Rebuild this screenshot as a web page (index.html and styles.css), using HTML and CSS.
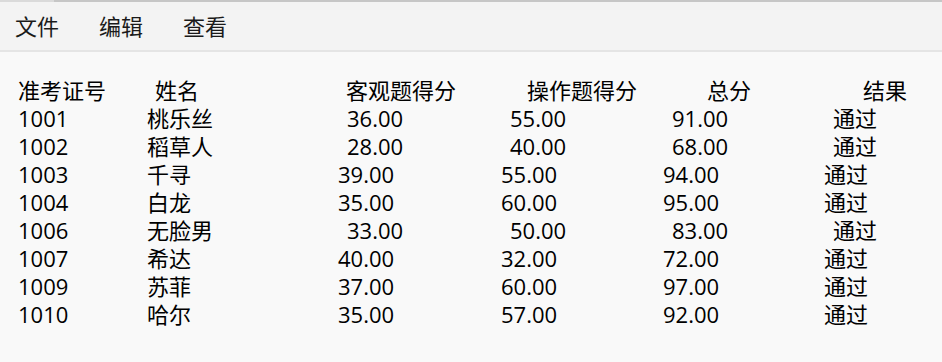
FILE: index.html
```html
<!DOCTYPE html>
<html lang="zh-CN">
<head>
  <meta charset="UTF-8" />
  <title>成绩查询</title>
  <link rel="stylesheet" href="styles.css">
</head>
<body>
  <div class="topline"></div>
  <div class="menubar">
    <span class="menu-item">文件</span>
    <span class="menu-item">编辑</span>
    <span class="menu-item">查看</span>
  </div>

  <div class="sheet">
    <div class="row head">
      <span>准考证号</span><span>姓名</span><span>客观题得分</span><span>操作题得分</span><span>总分</span><span>结果</span>
    </div>
    <div class="row wide">
      <span>1001</span><span>桃乐丝</span><span>36.00</span><span>55.00</span><span>91.00</span><span>通过</span>
    </div>
    <div class="row wide">
      <span>1002</span><span>稻草人</span><span>28.00</span><span>40.00</span><span>68.00</span><span>通过</span>
    </div>
    <div class="row">
      <span>1003</span><span>千寻</span><span>39.00</span><span>55.00</span><span>94.00</span><span>通过</span>
    </div>
    <div class="row">
      <span>1004</span><span>白龙</span><span>35.00</span><span>60.00</span><span>95.00</span><span>通过</span>
    </div>
    <div class="row wide">
      <span>1006</span><span>无脸男</span><span>33.00</span><span>50.00</span><span>83.00</span><span>通过</span>
    </div>
    <div class="row">
      <span>1007</span><span>希达</span><span>40.00</span><span>32.00</span><span>72.00</span><span>通过</span>
    </div>
    <div class="row">
      <span>1009</span><span>苏菲</span><span>37.00</span><span>60.00</span><span>97.00</span><span>通过</span>
    </div>
    <div class="row">
      <span>1010</span><span>哈尔</span><span>35.00</span><span>57.00</span><span>92.00</span><span>通过</span>
    </div>
  </div>
</body>
</html>
```

FILE: styles.css
```css
html, body {
  margin: 0;
  padding: 0;
}

body {
  font-family: "Open Sans", "Noto Sans CJK SC", sans-serif;
  background-color: #f9f9f9;
  color: #000;
  height: 362px;
  overflow: hidden;
}

.topline {
  height: 2px;
  background: linear-gradient(to right, #dadada 54px, #c6c6c6 54px);
}

.menubar {
  display: flex;
  gap: 40px;
  height: 48px;
  line-height: 48px;
  padding-left: 15px;
  background-color: #f3f3f3;
  border-bottom: 2px solid #e5e5e5;
  font-size: 22px;
  color: #1a1a1a;
}

.sheet {
  padding: 24px 0 0 18px;
  font-size: 22px;
}

.row {
  display: grid;
  grid-template-columns: 129px 191px 163px 162px 161px auto;
  height: 28px;
  line-height: 28px;
  white-space: nowrap;
}

/* some rows sit a few pixels further right */
.row.wide > :nth-child(n+3) {
  padding-left: 9px;
}

.row.head > :nth-child(2) { padding-left: 8px; }
.row.head > :nth-child(3) { padding-left: 8px; }
.row.head > :nth-child(4) { padding-left: 26px; }
.row.head > :nth-child(5) { padding-left: 44px; }
.row.head > :nth-child(6) { padding-left: 39px; }
```
